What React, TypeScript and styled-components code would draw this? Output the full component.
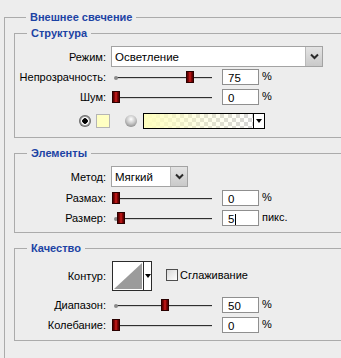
import React from 'react';
import styled, { createGlobalStyle } from 'styled-components';

const GlobalStyle = createGlobalStyle`
  html, body {
    margin: 0;
    padding: 0;
    background: #ededed;
    overflow: hidden;
  }
  body {
    font-family: "Liberation Sans", Arial, sans-serif;
    font-size: 11px;
    color: #000;
  }
`;

const Page = styled.div`
  width: 341px;
  height: 358px;
  overflow: hidden;
  box-sizing: border-box;
  padding: 10px 0 0 4px;
`;

const Group = styled.fieldset<{ $outer?: boolean; $mt?: number; $pb?: number }>`
  margin: ${(p) => p.$mt ?? 0}px 0 0 0;
  padding: ${(p) => (p.$outer ? '0 0 40px 9px' : `6px 0 ${p.$pb ?? 6}px 0`)};
  border: 1px solid #ababab;
  min-width: 0;
  box-sizing: border-box;
  width: ${(p) => (p.$outer ? 350 : 331)}px;
  display: flex;
  flex-direction: column;
`;

const Legend = styled.legend`
  margin-left: 12px;
  padding: 0 4px;
  font-weight: bold;
  font-size: 11px;
  line-height: 14px;
  color: #1c43a4;
`;

const Row = styled.div<{ $mt?: number; $h?: number }>`
  display: grid;
  grid-template-columns: 91px auto;
  column-gap: 6px;
  align-items: center;
  height: ${(p) => p.$h ?? 16}px;
  margin-top: ${(p) => p.$mt ?? 0}px;
`;

const Label = styled.span`
  text-align: right;
  white-space: nowrap;
`;

const Controls = styled.div`
  display: flex;
  align-items: center;
`;

const Select = styled.div<{ $w: number }>`
  width: ${(p) => p.$w}px;
  height: 21px;
  box-sizing: border-box;
  border: 1px solid #a3a3a3;
  background: #fff;
  display: flex;
  align-items: center;
  justify-content: space-between;
  padding-left: 3px;
  margin-left: -1px;
  font-size: 11.5px;
`;

const SelectButton = styled.div`
  width: 17px;
  height: 19px;
  box-sizing: border-box;
  border-left: 1px solid #b9b9b9;
  background: linear-gradient(#e4e4e4, #c9c9c9);
  display: flex;
  align-items: center;
  justify-content: center;
`;

const SliderBox = styled.div`
  position: relative;
  width: 104px;
  height: 16px;
  display: flex;
  align-items: center;
`;

const Track = styled.div`
  margin-left: 3px;
  width: 97px;
  height: 1px;
  background: #2f2f2f;
  box-shadow: 0 1px 0 #d0d0d0;
`;

const StartDot = styled.div`
  position: absolute;
  left: 2px;
  top: 7px;
  width: 4px;
  height: 4px;
  border-radius: 50%;
  background: #8a8a8a;
`;

const Thumb = styled.div`
  position: absolute;
  top: 2px;
  width: 8px;
  height: 12px;
  box-sizing: border-box;
  border: 1px solid #2a0000;
  background: linear-gradient(to right, #4a0000 0%, #8c0606 30%, #d02020 50%, #8c0606 70%, #4a0000 100%);
`;

const NumInput = styled.div`
  margin-left: 6px;
  width: 37px;
  height: 16px;
  box-sizing: border-box;
  border: 1px solid #8f8f8f;
  background: #fff;
  padding: 2px 0 0 5px;
  font-size: 11.5px;
  line-height: 12px;
  display: flex;
  align-items: center;
`;

const Caret = styled.span`
  display: inline-block;
  width: 1px;
  height: 11px;
  background: #000;
  margin-left: 1px;
`;

const Unit = styled.span`
  margin-left: 3px;
  margin-top: -3px;
`;

const ColorRow = styled.div`
  display: flex;
  align-items: center;
  height: 16px;
  margin-top: 8px;
  padding-left: 64px;
`;

const Radio = styled.div<{ $checked?: boolean }>`
  width: 12px;
  height: 12px;
  border-radius: 50%;
  box-sizing: border-box;
  background: ${(p) =>
    p.$checked
      ? 'radial-gradient(circle, #000 0 2.5px, #fff 3px 3.5px, #9a9a9a 4.5px, #5a5a5a 6px)'
      : 'radial-gradient(circle at 50% 35%, #ffffff 0, #c8c8c8 45%, #6f6f6f 100%)'};
  margin-right: ${(p) => (p.$checked ? 5 : 6)}px;
`;

const Swatch = styled.div`
  width: 14px;
  height: 14px;
  box-sizing: border-box;
  border: 1px solid #b5b5b5;
  background: #ffffc2;
  margin-right: 15px;
`;

const GradientPicker = styled.div`
  width: 122px;
  height: 16px;
  box-sizing: border-box;
  border: 1px solid #000;
  display: flex;
`;

const GradientFill = styled.div`
  flex: 1;
  background:
    linear-gradient(to right, #ffffbe 0%, rgba(255, 255, 190, 0.35) 55%, rgba(255, 255, 190, 0) 100%),
    repeating-conic-gradient(#d6d6d6 0% 25%, #ffffff 0% 50%) 0 0 / 8px 8px;
`;

const PickerArrow = styled.div`
  width: 10px;
  border-left: 1px solid #000;
  background: #fff;
  display: flex;
  align-items: center;
  justify-content: center;
`;

const ContourBox = styled.div`
  width: 40px;
  height: 30px;
  box-sizing: border-box;
  border: 1px solid #2b2b2b;
  background: #fff;
  display: flex;
`;

const ContourPreview = styled.div`
  width: 30px;
  height: 28px;
  border-right: 1px solid #2b2b2b;
  display: flex;
`;

const ContourArrow = styled.div`
  flex: 1;
  display: flex;
  align-items: center;
  justify-content: center;
`;

const CheckBox = styled.div`
  margin-left: 14px;
  width: 12px;
  height: 12px;
  box-sizing: border-box;
  border: 1px solid #4e4e4e;
  background: linear-gradient(135deg, #d8d8d8, #ffffff);
  margin-top: -2px;
`;

const CheckLabel = styled.span`
  margin-left: 2px;
  margin-top: -2px;
`;

function Chevron() {
  return (
    <svg width="9" height="7" viewBox="0 0 9 7">
      <path d="M1 1.5 L4.5 5 L8 1.5" fill="none" stroke="#2a2a2a" strokeWidth="2" />
    </svg>
  );
}

function DownTriangle() {
  return (
    <svg width="6" height="4" viewBox="0 0 6 4">
      <path d="M0 0 H6 L3 4 Z" fill="#000" />
    </svg>
  );
}

function Dropdown({ value, width }: { value: string; width: number }) {
  return (
    <Select $w={width}>
      <span>{value}</span>
      <SelectButton>
        <Chevron />
      </SelectButton>
    </Select>
  );
}

function SliderRow({
  label,
  pos,
  value,
  unit,
  caret,
  mt,
}: {
  label: string;
  pos: number;
  value: string;
  unit: string;
  caret?: boolean;
  mt?: number;
}) {
  return (
    <Row $mt={mt}>
      <Label>{label}</Label>
      <Controls>
        <SliderBox>
          <StartDot />
          <Track />
          <Thumb style={{ left: Math.round(pos * 98) }} />
        </SliderBox>
        <NumInput>
          {value}
          {caret && <Caret />}
        </NumInput>
        <Unit>{unit}</Unit>
      </Controls>
    </Row>
  );
}

export default function App() {
  return (
    <>
      <GlobalStyle />
      <Page>
        <Group $outer>
          <Legend>Внешнее свечение</Legend>

          <Group $mt={2} $pb={8}>
            <Legend>Структура</Legend>
            <Row $h={21}>
              <Label>Режим:</Label>
              <Controls>
                <Dropdown value="Осветление" width={212} />
              </Controls>
            </Row>
            <SliderRow label="Непрозрачность:" pos={0.75} value="75" unit="%" mt={2} />
            <SliderRow label="Шум:" pos={0} value="0" unit="%" mt={4} />
            <ColorRow>
              <Radio $checked />
              <Swatch />
              <Radio />
              <GradientPicker>
                <GradientFill />
                <PickerArrow>
                  <DownTriangle />
                </PickerArrow>
              </GradientPicker>
            </ColorRow>
          </Group>

          <Group $mt={8} $pb={6}>
            <Legend>Элементы</Legend>
            <Row $h={21}>
              <Label>Метод:</Label>
              <Controls>
                <Dropdown value="Мягкий" width={77} />
              </Controls>
            </Row>
            <SliderRow label="Размах:" pos={0} value="0" unit="%" mt={3} />
            <SliderRow label="Размер:" pos={0.05} value="5" unit="пикс." caret mt={4} />
          </Group>

          <Group $mt={8} $pb={7}>
            <Legend>Качество</Legend>
            <Row $h={30}>
              <Label>Контур:</Label>
              <Controls>
                <ContourBox>
                  <ContourPreview>
                    <svg width="30" height="28" viewBox="0 0 30 28">
                      <path d="M1 27 L29 1 L29 27 Z" fill="#9b9b9b" />
                    </svg>
                  </ContourPreview>
                  <ContourArrow>
                    <DownTriangle />
                  </ContourArrow>
                </ContourBox>
                <CheckBox />
                <CheckLabel>Сглаживание</CheckLabel>
              </Controls>
            </Row>
            <SliderRow label="Диапазон:" pos={0.5} value="50" unit="%" mt={6} />
            <SliderRow label="Колебание:" pos={0} value="0" unit="%" mt={4} />
          </Group>
        </Group>
      </Page>
    </>
  );
}
